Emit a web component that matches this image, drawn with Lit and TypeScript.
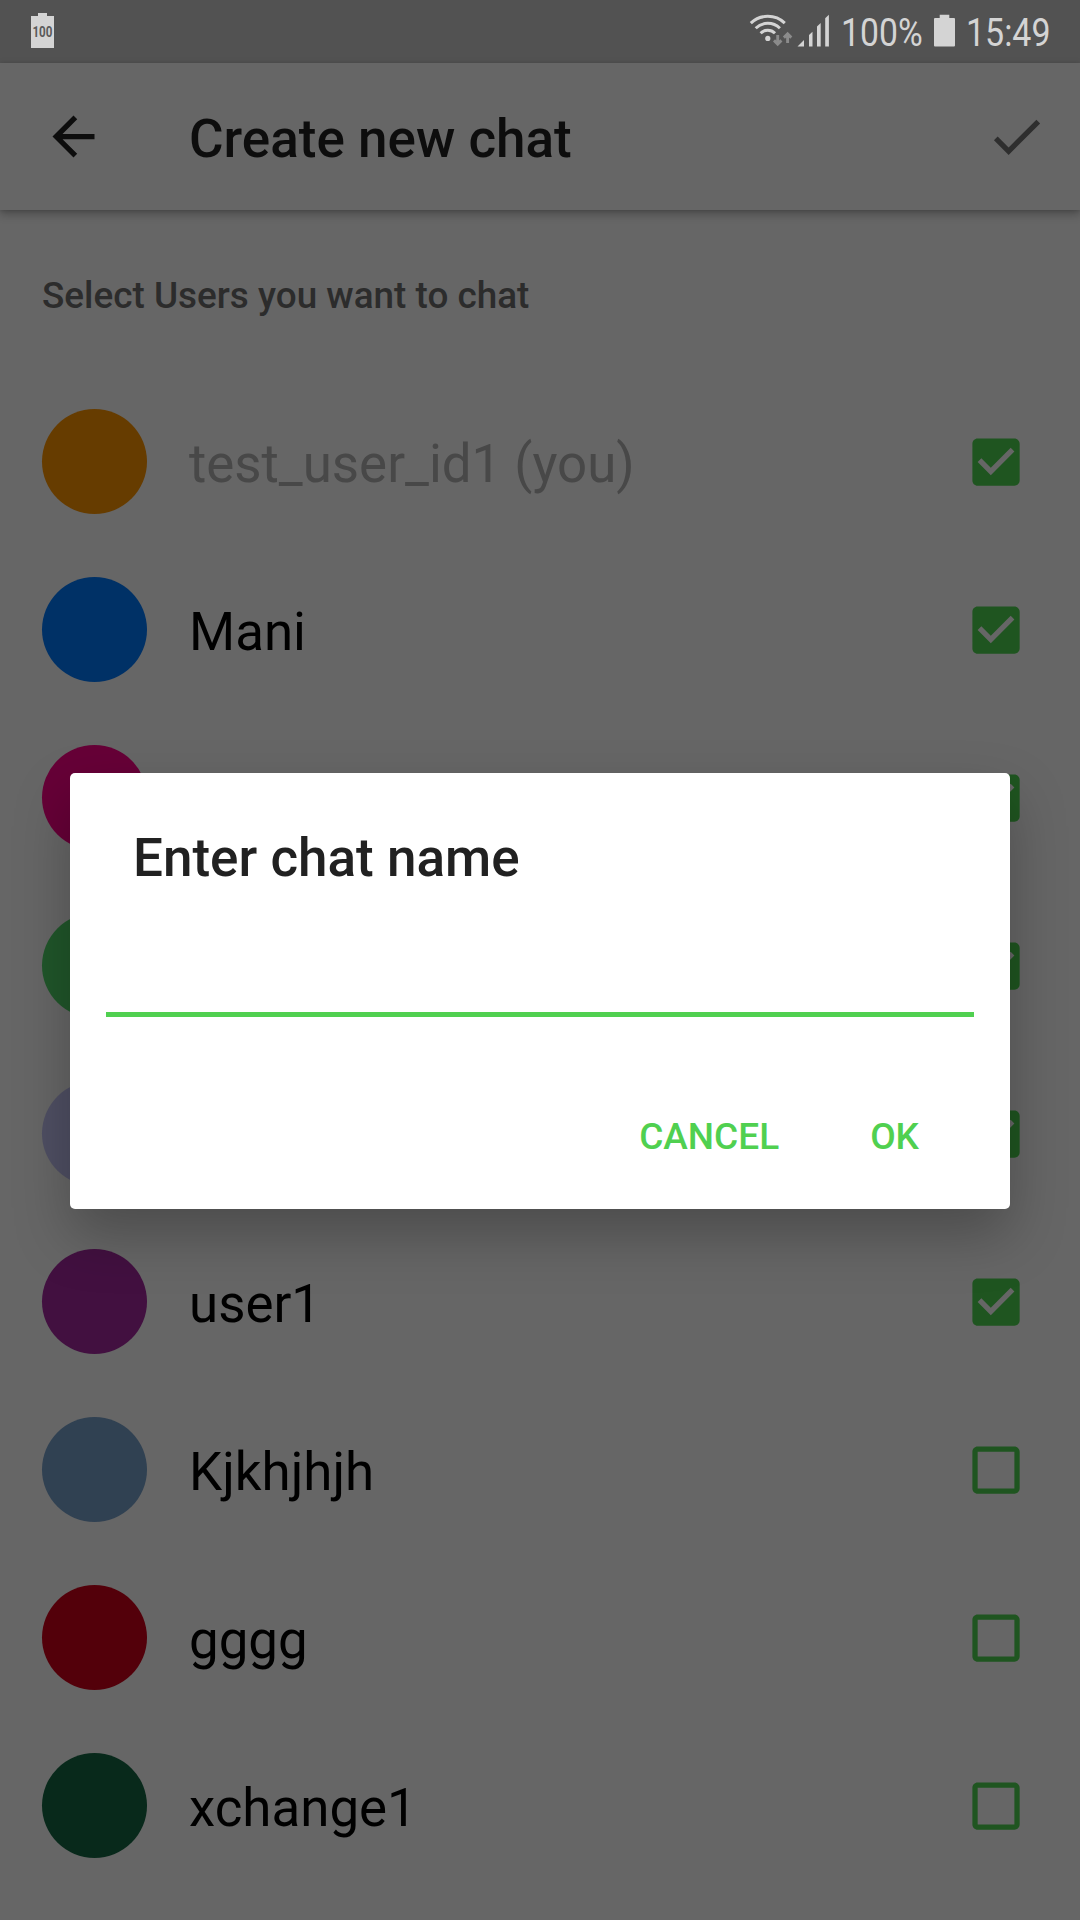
import { LitElement, html, css, svg } from "lit";
import { customElement, property } from "lit/decorators.js";

interface User { name: string; color: string; checked: boolean; self?: boolean; }

const USERS: User[] = [
  { name: "test_user_id1 (you)", color: "#663c00", checked: true, self: true },
  { name: "Mani", color: "#003166", checked: true },
  { name: "", color: "#660037", checked: true },
  { name: "", color: "#20562a", checked: true },
  { name: "", color: "#4f4f63", checked: true },
  { name: "user1", color: "#421040", checked: true },
  { name: "Kjkhjhjh", color: "#304152", checked: false },
  { name: "gggg", color: "#53000a", checked: false },
  { name: "xchange1", color: "#08291b", checked: false },
];

@customElement("user-row")
class UserRow extends LitElement {
  @property({ attribute: false }) user!: User;

  static styles = css`
    :host { display: flex; align-items: center; height: 168px; padding: 0 53px 0 42px; box-sizing: border-box; }
    .avatar { width: 105px; height: 105px; border-radius: 50%; flex: none; }
    .name { flex: 1; margin-left: 42px; font-size: 52.85px; line-height: 62px; color: #000; padding-top: 6px; white-space: pre; }
    .self { color: #484848; }
    .box { width: 63px; height: 63px; flex: none; fill: #1f5520; margin-top: 1px; }
  `;

  render() {
    const { name, color, checked, self } = this.user;
    return html`
      <div class="avatar" style="background:${color}"></div>
      <div class="name ${self ? "self" : ""}">${name}</div>
      <svg class="box" viewBox="0 0 24 24">
        <g transform="translate(.2 .2)">
        ${checked
          ? svg`<path d="M19 3H5c-1.11 0-2 .9-2 2v14c0 1.1.89 2 2 2h14c1.11 0 2-.9 2-2V5c0-1.1-.89-2-2-2zm-9 14l-5-5 1.41-1.41L10 14.17l7.59-7.59L19 8l-9 9z"/>`
          : svg`<path d="M19 5v14H5V5h14m0-2H5c-1.1 0-2 .9-2 2v14c0 1.1.9 2 2 2h14c1.1 0 2-.9 2-2V5c0-1.1-.9-2-2-2z"/>`}
        </g>
      </svg>
    `;
  }
}

@customElement("status-bar")
class StatusBar extends LitElement {
  static styles = css`
    :host { display: flex; align-items: flex-start; height: 63px; padding: 0 24px 0 31px; box-sizing: border-box; background: #525252; color: #d4d4d4; }
    .level { width: 23px; height: 63px; flex: none; overflow: visible; }
    .digits { font: 700 14px Roboto, sans-serif; fill: #5a5a5a; }
    .spacer { flex: 1; }
    .signals { width: 82px; height: 63px; flex: none; margin-right: 10px; }
    .battery { width: 21px; height: 63px; flex: none; margin-right: 11px; }
    .label { flex: none; font-size: 39px; line-height: 63px; height: 63px; white-space: pre; }
    .percent { width: 93px; }
    .time { width: 90px; }
    .condensed { display: block; transform-origin: 0 50%; transform: scaleX(0.87); padding-top: 2px; width: max-content; }
    .percent .condensed { transform: scaleX(0.865); }
  `;

  render() {
    return html`
      <svg class="level" viewBox="31 0 23 63">
        <path fill="#d4d4d4" d="M31 16h7v-3h9v3h7v32H31z"/>
        <text class="digits" x="32.4" y="37.2" textLength="20" lengthAdjust="spacingAndGlyphs">100</text>
      </svg>
      <div class="spacer"></div>
      <svg class="signals" viewBox="749 0 82 63">
        <g fill="none" stroke="#d4d4d4" stroke-width="3">
          <path d="M750.8 23.2a24.5 24.5 0 0 1 34 0"/>
          <path d="M755.7 28.3a17.3 17.3 0 0 1 24.2 0"/>
          <path d="M760.6 33.3a10.3 10.3 0 0 1 14.4 0"/>
        </g>
        <circle cx="767.8" cy="38.4" r="2.6" fill="#d4d4d4"/>
        <g fill="none" stroke="#8b8b8b" stroke-width="2.9">
          <path d="M777.7 35v9M774 40.4l3.7 3.7 3.7-3.7"/>
          <path d="M787.6 43v-9M783.9 37.6l3.7-3.7 3.7 3.7"/>
        </g>
        <g fill="#d4d4d4">
          <path d="M797.5 46.5l6.5-6.5v6.5z"/>
          <path d="M809 46.5V35l3.5-3.3v14.8z"/>
          <path d="M817 46.5V26.4l3.7-3.4v23.5z"/>
          <path d="M825.2 46.5V18.2l3.7-3.4v31.7z"/>
        </g>
      </svg>
      <div class="label percent"><span class="condensed">100%</span></div>
      <svg class="battery" viewBox="934 0 21 63">
        <path fill="#d4d4d4" d="M935 18h4.7v-3.2h9.6V18h4.7q1 0 1 1v26.5q0 1-1 1h-19q-1 0-1-1V19q0-1 1-1z"/>
      </svg>
      <div class="label time"><span class="condensed">15:49</span></div>
    `;
  }
}

@customElement("app-root")
class AppRoot extends LitElement {
  static styles = css`
    :host { display: block; position: relative; width: 1080px; height: 1920px; overflow: hidden; background: #666; font-family: Roboto, "Liberation Sans", sans-serif; }
    .appbar { display: flex; align-items: center; height: 147px; padding: 0 32px 0 42px; box-sizing: border-box; background: #666; box-shadow: 0 4px 9px rgba(0,0,0,.28), 0 1px 3px rgba(0,0,0,.1); position: relative; }
    .back { width: 63px; height: 63px; fill: #0d0d0d; }
    .title { flex: 1; margin-left: 84px; font-weight: 500; font-size: 53px; line-height: 62px; color: #0d0d0d; padding-top: 4px; }
    .done { width: 63px; height: 63px; fill: #2e2e2e; margin-bottom: 1px; }
    .heading { height: 167px; padding: 3px 42px 0; display: flex; align-items: center; box-sizing: border-box; font-weight: 500; font-size: 36.88px; color: #2c2c2c; }
    .overlay { position: absolute; left: 70px; top: 773px; width: 940px; height: 436px; box-sizing: border-box; border-radius: 5px; background: #fff; display: flex; flex-direction: column; box-shadow: 0 26px 56px rgba(0,0,0,.26); }
    .question { margin: 54px 63px 0; font-weight: 500; font-size: 53px; line-height: 62px; color: #212121; }
    .field { margin: 58px 36px 0; height: 70px; box-sizing: border-box; border-bottom: 5px solid #50d050; }
    .actions { display: flex; justify-content: flex-end; margin-top: 98px; padding-right: 91px; gap: 91px; font-weight: 500; font-size: 37px; line-height: 44px; color: #50d050; }
  `;

  render() {
    return html`
      <status-bar></status-bar>
      <header class="appbar">
        <svg class="back" viewBox="0 0 24 24"><path d="M20 11H7.83l5.59-5.59L12 4l-8 8 8 8 1.41-1.41L7.83 13H20v-2z"/></svg>
        <div class="title">Create new chat</div>
        <svg class="done" viewBox="0 0 24 24"><path d="M9 16.17L4.83 12l-1.42 1.41L9 19 21 7l-1.41-1.41z"/></svg>
      </header>
      <div class="heading">Select Users you want to chat</div>
      <main>${USERS.map((user) => html`<user-row .user=${user}></user-row>`)}</main>
      <section class="overlay">
        <div class="question">Enter chat name</div>
        <div class="field"></div>
        <div class="actions"><span>CANCEL</span><span>OK</span></div>
      </section>
    `;
  }
}
